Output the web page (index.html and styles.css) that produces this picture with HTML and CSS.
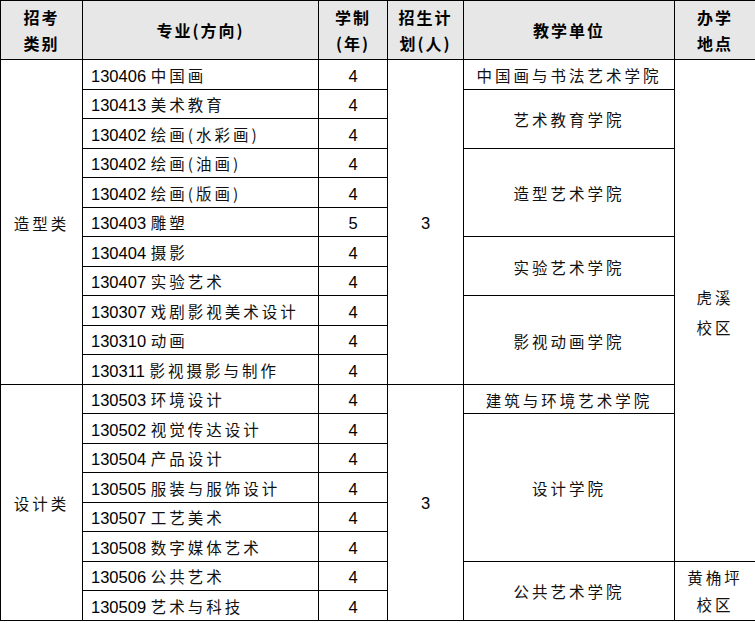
FILE: index.html
```html
<!DOCTYPE html>
<html lang="zh">
<head>
<meta charset="utf-8">
<link rel="stylesheet" href="styles.css">
</head>
<body>
<table class="plan">
  <colgroup>
    <col class="c-cat"><col class="c-major"><col class="c-years"><col class="c-num"><col class="c-unit"><col class="c-loc">
  </colgroup>
  <thead>
    <tr>
      <th>招考<br>类别</th>
      <th>专业(方向)</th>
      <th>学制<br>(年)</th>
      <th>招生计<br>划(人)</th>
      <th>教学单位</th>
      <th>办学<br>地点</th>
    </tr>
  </thead>
  <tbody>
    <tr>
      <td rowspan="11" class="cat">造型类</td>
      <td class="major">130406 <span class="cn">中国画</span></td>
      <td class="num">4</td>
      <td rowspan="11" class="num">3</td>
      <td class="unit">中国画与书法艺术学院</td>
      <td rowspan="17" class="loc">虎溪<br>校区</td>
    </tr>
    <tr>
      <td class="major">130413 <span class="cn">美术教育</span></td>
      <td class="num">4</td>
      <td rowspan="2" class="unit">艺术教育学院</td>
    </tr>
    <tr>
      <td class="major">130402 <span class="cn">绘画(水彩画)</span></td>
      <td class="num">4</td>
    </tr>
    <tr>
      <td class="major">130402 <span class="cn">绘画(油画)</span></td>
      <td class="num">4</td>
      <td rowspan="3" class="unit">造型艺术学院</td>
    </tr>
    <tr>
      <td class="major">130402 <span class="cn">绘画(版画)</span></td>
      <td class="num">4</td>
    </tr>
    <tr>
      <td class="major">130403 <span class="cn">雕塑</span></td>
      <td class="num">5</td>
    </tr>
    <tr>
      <td class="major">130404 <span class="cn">摄影</span></td>
      <td class="num">4</td>
      <td rowspan="2" class="unit">实验艺术学院</td>
    </tr>
    <tr>
      <td class="major">130407 <span class="cn">实验艺术</span></td>
      <td class="num">4</td>
    </tr>
    <tr>
      <td class="major">130307 <span class="cn">戏剧影视美术设计</span></td>
      <td class="num">4</td>
      <td rowspan="3" class="unit">影视动画学院</td>
    </tr>
    <tr>
      <td class="major">130310 <span class="cn">动画</span></td>
      <td class="num">4</td>
    </tr>
    <tr>
      <td class="major">130311 <span class="cn">影视摄影与制作</span></td>
      <td class="num">4</td>
    </tr>
    <tr>
      <td rowspan="8" class="cat">设计类</td>
      <td class="major">130503 <span class="cn">环境设计</span></td>
      <td class="num">4</td>
      <td rowspan="8" class="num">3</td>
      <td class="unit">建筑与环境艺术学院</td>
    </tr>
    <tr>
      <td class="major">130502 <span class="cn">视觉传达设计</span></td>
      <td class="num">4</td>
      <td rowspan="5" class="unit">设计学院</td>
    </tr>
    <tr>
      <td class="major">130504 <span class="cn">产品设计</span></td>
      <td class="num">4</td>
    </tr>
    <tr>
      <td class="major">130505 <span class="cn">服装与服饰设计</span></td>
      <td class="num">4</td>
    </tr>
    <tr>
      <td class="major">130507 <span class="cn">工艺美术</span></td>
      <td class="num">4</td>
    </tr>
    <tr>
      <td class="major">130508 <span class="cn">数字媒体艺术</span></td>
      <td class="num">4</td>
    </tr>
    <tr>
      <td class="major">130506 <span class="cn">公共艺术</span></td>
      <td class="num">4</td>
      <td rowspan="2" class="unit">公共艺术学院</td>
      <td rowspan="2" class="loc loc-small">黄桷坪<br>校区</td>
    </tr>
    <tr>
      <td class="major">130509 <span class="cn">艺术与科技</span></td>
      <td class="num">4</td>
    </tr>
  </tbody>
</table>
</body>
</html>
```
FILE: styles.css
```css
html, body {
  margin: 0;
  padding: 0;
  background: #ffffff;
}

.plan {
  border-collapse: collapse;
  table-layout: fixed;
  width: 755px;
  font-family: "Liberation Sans", "Noto Sans CJK SC", sans-serif;
  font-size: 16.5px;
  color: #000;
}

.c-cat { width: 82px; }
.c-major { width: 236px; }
.c-years { width: 69px; }
.c-num { width: 76px; }
.c-unit { width: 211px; }
.c-loc { width: 81px; }

.plan th,
.plan td {
  border: 1px solid #000;
  padding: 0;
  text-align: center;
  vertical-align: middle;
}

.plan thead th {
  height: 58px;
  background: #e7e7e7;
  font-family: "Noto Sans CJK SC", sans-serif;
  font-weight: bold;
  font-size: 16px;
  line-height: 26px;
  letter-spacing: 2px;
}

.plan tbody td {
  height: 25.5px;
  line-height: 1;
  padding-top: 3px;
}

.plan td.major {
  text-align: left;
  padding-left: 8px;
  white-space: nowrap;
}

.cn,
.plan td.cat,
.plan td.unit,
.plan td.loc {
  font-family: "Noto Sans CJK SC", sans-serif;
  font-size: 15.5px;
  letter-spacing: 3px;
  color: #111;
}

.plan td.loc {
  line-height: 30px;
}

.plan td.loc-small {
  line-height: 27px;
  padding-top: 0;
}
```
